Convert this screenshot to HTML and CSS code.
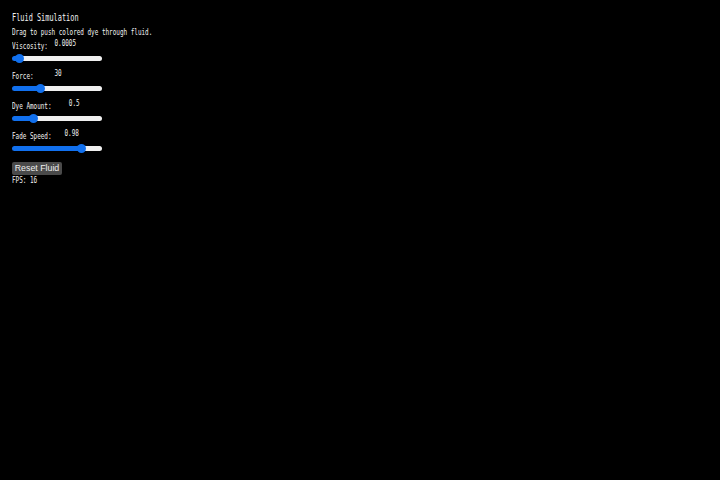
FILE: index.html
```html
<!DOCTYPE html>
<html lang="en">
<head>
    <meta charset="UTF-8">
    <meta name="viewport" content="width=device-width, initial-scale=1.0">
    <title>Fluid Simulation</title>
    <link rel="stylesheet" href="styles.css">
</head>
<body>
<canvas id="fluid"></canvas>
<div class="panel">
    <div class="title"><span class="txt">Fluid Simulation</span></div>
    <div class="desc"><span class="txt">Drag to push colored dye through fluid.</span></div>

    <div class="ctrl">
        <div class="head"><span class="txt">Viscosity:<span class="val val-visc">0.0005</span></span></div>
        <input class="slider" type="range" min="0.0001" max="0.01" step="0.0001" value="0.0005" style="--fill: 8%">
    </div>
    <div class="ctrl">
        <div class="head"><span class="txt">Force:<span class="val val-force">30</span></span></div>
        <input class="slider" type="range" min="1" max="100" step="1" value="30" style="--fill: 31%">
    </div>
    <div class="ctrl">
        <div class="head"><span class="txt">Dye Amount:<span class="val val-dye">0.5</span></span></div>
        <input class="slider" type="range" min="0.1" max="2" step="0.1" value="0.5" style="--fill: 23%">
    </div>
    <div class="ctrl">
        <div class="head"><span class="txt">Fade Speed:<span class="val val-fade">0.98</span></span></div>
        <input class="slider" type="range" min="0.9" max="1" step="0.01" value="0.98" style="--fill: 78%">
    </div>

    <button class="reset">Reset Fluid</button>
    <div class="fps"><span class="txt">FPS: 16</span></div>
</div>
</body>
</html>
```

FILE: styles.css
```css
*{
    margin: 0;
    padding: 0;
    box-sizing: border-box;
}
html,body{
    width: 100%;
    height: 100%;
    background: #000;
    overflow: hidden;
}
#fluid{
    position: absolute;
    left: 0;
    top: 0;
    width: 100%;
    height: 100%;
    background: #000;
}
.panel{
    position: absolute;
    left: 12px;
    top: 11px;
    color: #f2f2f2;
    font-family: "DejaVu Sans Mono", monospace;
    font-size: 8.3px;
}
/* narrow the monospace glyphs */
.txt{
    display: inline-block;
    white-space: nowrap;
    transform: scaleX(.72);
    transform-origin: 0 50%;
}
.title{
    font-size: 9.6px;
    line-height: 14px;
}
.desc{
    line-height: 14px;
    margin-bottom: 1px;
}
.head{
    height: 13px;
    line-height: 13px;
}
.val{
    position: relative;
    top: -3px;
}
.val-visc{ margin-left: 9px; }
.val-force{ margin-left: 29px; }
.val-dye{ margin-left: 24px; }
.val-fade{ margin-left: 18px; }

.slider{
    -webkit-appearance: none;
    appearance: none;
    display: block;
    width: 90px;
    height: 10px;
    margin-bottom: 7px;
    background: transparent;
    outline: none;
}
.slider::-webkit-slider-runnable-track{
    height: 5px;
    border-radius: 3px;
    background: linear-gradient(to right, #1170ee var(--fill), #f0f0f0 var(--fill));
}
.slider::-webkit-slider-thumb{
    -webkit-appearance: none;
    width: 9px;
    height: 9px;
    margin-top: -2px;
    border: 0;
    border-radius: 50%;
    background: #1170ee;
}
/* margin collapses with the last slider's bottom margin */
.reset{
    display: block;
    width: 50px;
    height: 13px;
    margin-top: 9px;
    border: 0;
    border-radius: 2px;
    background: #4a4a4a;
    color: #eee;
    font-family: "Liberation Sans", Arial, sans-serif;
    font-size: 8.8px;
    line-height: 13px;
}
.fps{
    line-height: 10px;
}
```
